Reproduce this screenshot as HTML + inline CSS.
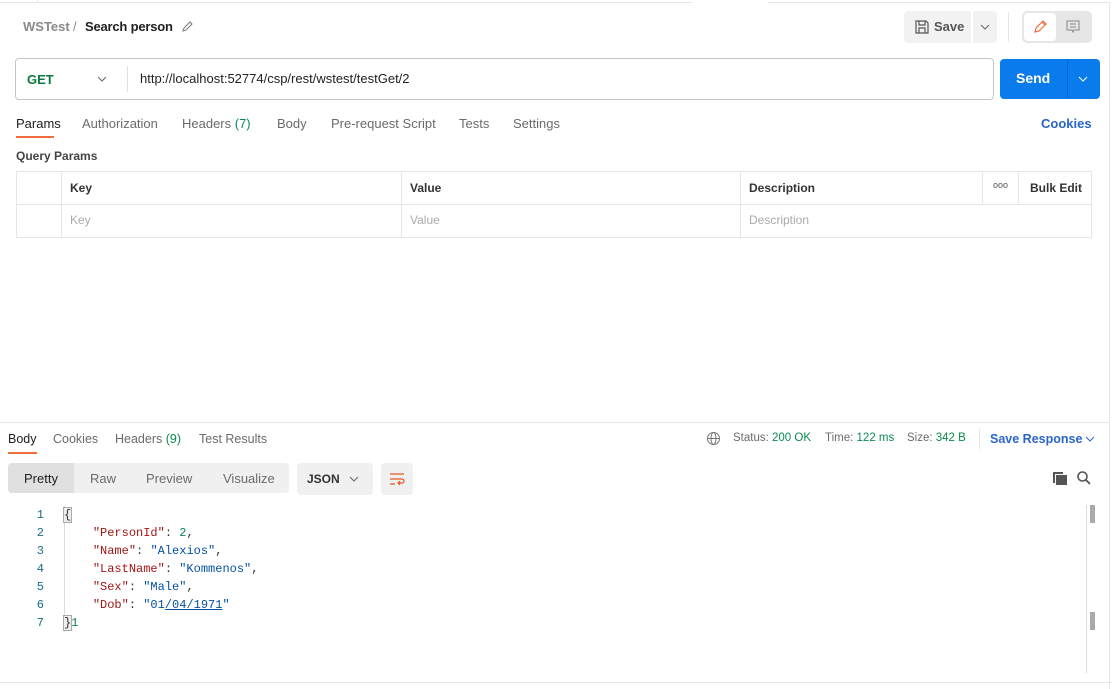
<!DOCTYPE html>
<html><head><style>
*{box-sizing:border-box;margin:0;padding:0}
body{width:1112px;height:689px;background:#fff;font-family:"Liberation Sans",sans-serif;font-size:13px;color:#212121;position:relative;overflow:hidden}
.a{position:absolute}
.t{color:#6b6b6b}
.mono{font-family:"Liberation Mono",monospace;font-size:12px}
</style></head><body>
<div class="a" style="left:0;top:2px;width:692px;height:1px;background:#e6e6e6"></div>
<div class="a" style="left:768px;top:2px;width:342px;height:1px;background:#e6e6e6"></div>
<div class="a" style="left:37px;top:0;width:1px;height:3px;background:#e6e6e6"></div>
<div class="a" style="left:1109px;top:2px;width:1px;height:687px;background:#e6e6e6"></div>
<div class="a" style="left:0;top:682px;width:1112px;height:1px;background:#e6e6e6"></div>

<div class="a" style="left:23px;top:19px;color:#8a8a8a;font-weight:bold">WSTest</div>
<div class="a" style="left:73px;top:19px;color:#8a8a8a">/</div>
<div class="a" style="left:85px;top:19px;font-weight:bold;letter-spacing:-0.2px">Search person</div>
<svg class="a" style="left:181px;top:20px" width="13" height="13" viewBox="0 0 13 13"><path d="M2 11l1-3 6-6 2 2-6 6z" fill="none" stroke="#777" stroke-width="1"/></svg>

<div class="a" style="left:904px;top:11px;width:67px;height:32px;background:#f2f2f2;border-radius:4px 0 0 4px"></div>
<svg class="a" style="left:914px;top:19px" width="16" height="16" viewBox="0 0 16 16"><path d="M2 2h10l2 2v10H2z M5 2v4h6V2 M5 14V9h6v5" fill="none" stroke="#555" stroke-width="1.2"/></svg>
<div class="a" style="left:934px;top:19px;font-weight:bold;color:#555">Save</div>
<div class="a" style="left:973px;top:11px;width:24px;height:32px;background:#f2f2f2;border-radius:0 4px 4px 0"></div>
<svg class="a" style="left:980px;top:23px" width="10" height="8"><path d="M1 2l4 4 4-4" fill="none" stroke="#666"/></svg>
<div class="a" style="left:1008px;top:12px;width:1px;height:30px;background:#e6e6e6"></div>
<div class="a" style="left:1022px;top:11px;width:70px;height:32px;background:#e6e6e6;border-radius:5px"></div>
<div class="a" style="left:1024px;top:13px;width:32px;height:28px;background:#fff;border-radius:4px"></div>
<svg class="a" style="left:1032px;top:19px" width="16" height="16" viewBox="0 0 16 16"><path d="M3 13l1-4 7-7 3 3-7 7z M10 3l3 3" fill="none" stroke="#f26b3a" stroke-width="1.2"/></svg>
<svg class="a" style="left:1065px;top:19px" width="16" height="16" viewBox="0 0 16 16"><path d="M2 2h12v9H9l-1 2-1-2H2z M5 5h6 M5 8h6" fill="none" stroke="#888" stroke-width="1"/></svg>

<div class="a" style="left:15px;top:58px;width:979px;height:42px;border:1px solid #c4c4c4;border-radius:4px"></div>
<div class="a" style="left:27px;top:72px;font-weight:bold;color:#0b7a3e">GET</div>
<svg class="a" style="left:97px;top:75px" width="10" height="8"><path d="M1 2l4 4 4-4" fill="none" stroke="#666"/></svg>
<div class="a" style="left:127px;top:66px;width:1px;height:26px;background:#e0e0e0"></div>
<div class="a" style="left:140px;top:71px">http://localhost:52774/csp/rest/wstest/testGet/2</div>
<div class="a" style="left:1000px;top:59px;width:100px;height:40px;background:#097bed;border-radius:4px"></div>
<div class="a" style="left:1067px;top:59px;width:1px;height:40px;background:#0a66c8"></div>
<div class="a" style="left:1016px;top:70px;color:#fff;font-weight:bold;font-size:14px">Send</div>
<svg class="a" style="left:1078px;top:75px" width="10" height="8"><path d="M1 2l4 4 4-4" fill="none" stroke="#fff"/></svg>

<div class="a" style="left:16px;top:116px">Params</div>
<div class="a" style="left:16px;top:136px;width:38px;height:2px;background:#f26b3a"></div>
<div class="a t" style="left:82px;top:116px">Authorization</div>
<div class="a t" style="left:182px;top:116px">Headers <span style="color:#0b8a4e">(7)</span></div>
<div class="a t" style="left:277px;top:116px">Body</div>
<div class="a t" style="left:331px;top:116px">Pre-request Script</div>
<div class="a t" style="left:459px;top:116px">Tests</div>
<div class="a t" style="left:513px;top:116px">Settings</div>
<div class="a" style="left:1041px;top:116px;color:#2a65c9;font-weight:bold">Cookies</div>

<div class="a" style="left:16px;top:149px;font-size:12px;font-weight:bold;color:#444">Query Params</div>
<div class="a" style="left:16px;top:171px;width:1076px;height:67px;border:1px solid #e6e6e6"></div>
<div class="a" style="left:16px;top:204px;width:1076px;height:1px;background:#e6e6e6"></div>
<div class="a" style="left:61px;top:171px;width:1px;height:67px;background:#e6e6e6"></div>
<div class="a" style="left:401px;top:171px;width:1px;height:67px;background:#e6e6e6"></div>
<div class="a" style="left:740px;top:171px;width:1px;height:67px;background:#e6e6e6"></div>
<div class="a" style="left:982px;top:171px;width:1px;height:33px;background:#e6e6e6"></div>
<div class="a" style="left:1018px;top:171px;width:1px;height:33px;background:#e6e6e6"></div>
<div class="a" style="left:70px;top:181px;font-size:12px;font-weight:bold;color:#333">Key</div>
<div class="a" style="left:410px;top:181px;font-size:12px;font-weight:bold;color:#333">Value</div>
<div class="a" style="left:749px;top:181px;font-size:12px;font-weight:bold;color:#333">Description</div>
<div class="a" style="left:993px;top:180px;font-size:9px;color:#555">ooo</div>
<div class="a" style="left:1030px;top:181px;font-size:12px;font-weight:bold;color:#333">Bulk Edit</div>
<div class="a" style="left:70px;top:213px;font-size:12px;color:#aaa">Key</div>
<div class="a" style="left:410px;top:213px;font-size:12px;color:#aaa">Value</div>
<div class="a" style="left:749px;top:213px;font-size:12px;color:#aaa">Description</div>

<div class="a" style="left:0;top:422px;width:1109px;height:1px;background:#e6e6e6"></div>
<div class="a" style="left:8px;top:432px;font-size:12.5px">Body</div>
<div class="a" style="left:8px;top:452px;width:29px;height:2px;background:#f26b3a"></div>
<div class="a t" style="left:53px;top:432px;font-size:12.5px">Cookies</div>
<div class="a t" style="left:115px;top:432px;font-size:12.5px">Headers <span style="color:#0b8a4e">(9)</span></div>
<div class="a t" style="left:199px;top:432px;font-size:12.5px">Test Results</div>
<svg class="a" style="left:706px;top:431px" width="15" height="15" viewBox="0 0 15 15"><circle cx="7.5" cy="7.5" r="6" fill="none" stroke="#777"/><ellipse cx="7.5" cy="7.5" rx="2.5" ry="6" fill="none" stroke="#777"/><path d="M1.5 7.5h12" stroke="#777"/></svg>
<div class="a t" style="left:733px;top:432px;font-size:11.5px">Status: <span style="color:#0b8a4e">200 OK</span></div>
<div class="a t" style="left:825px;top:432px;font-size:11.5px">Time: <span style="color:#0b8a4e">122 ms</span></div>
<div class="a t" style="left:907px;top:432px;font-size:11.5px">Size: <span style="color:#0b8a4e">342 B</span></div>
<div class="a" style="left:979px;top:429px;width:1px;height:20px;background:#e6e6e6"></div>
<div class="a" style="left:990px;top:432px;font-size:12.5px;font-weight:bold;color:#2a65c9">Save Response</div>
<svg class="a" style="left:1085px;top:435px" width="10" height="8"><path d="M1 2l4 4 4-4" fill="none" stroke="#2a65c9"/></svg>

<div class="a" style="left:8px;top:463px;width:281px;height:30px;background:#f0f0f0;border-radius:4px"></div>
<div class="a" style="left:8px;top:463px;width:66px;height:30px;background:#e0e0e0;border-radius:4px 0 0 4px"></div>
<div class="a" style="left:24px;top:471px">Pretty</div>
<div class="a t" style="left:90px;top:471px">Raw</div>
<div class="a t" style="left:146px;top:471px">Preview</div>
<div class="a t" style="left:223px;top:471px">Visualize</div>
<div class="a" style="left:297px;top:463px;width:76px;height:32px;background:#f0f0f0;border-radius:4px"></div>
<div class="a" style="left:307px;top:472px;font-size:12px;font-weight:bold;color:#333">JSON</div>
<svg class="a" style="left:349px;top:475px" width="10" height="8"><path d="M1 2l4 4 4-4" fill="none" stroke="#666"/></svg>
<div class="a" style="left:381px;top:463px;width:32px;height:32px;background:#f0f0f0;border-radius:4px"></div>
<svg class="a" style="left:389px;top:471px" width="16" height="16" viewBox="0 0 16 16"><path d="M1 3h14 M1 8h12a2 2 0 010 4H9 M11 10l-2 2 2 2 M1 13h5" fill="none" stroke="#e8572a" stroke-width="1.2"/></svg>
<svg class="a" style="left:1052px;top:470px" width="16" height="16" viewBox="0 0 16 16"><path d="M1 2h10v2H3v9H1z" fill="#555"/><rect x="4" y="5" width="11" height="10" fill="#555"/></svg>
<svg class="a" style="left:1076px;top:470px" width="16" height="16" viewBox="0 0 16 16"><circle cx="6.5" cy="6.5" r="4.5" fill="none" stroke="#555" stroke-width="1.6"/><path d="M10 10l4 4" stroke="#555" stroke-width="1.8"/></svg>

<div class="a" style="left:1086px;top:505px;width:1px;height:168px;background:#ddd"></div>
<div class="a" style="left:1090px;top:505px;width:5px;height:18px;background:#aaa"></div>
<div class="a" style="left:1090px;top:612px;width:5px;height:18px;background:#aaa"></div>

<div class="a" style="left:64px;top:506px;width:1px;height:126px;background:#ddd"></div>
<div class="a mono" style="left:30px;top:506px;line-height:18px;color:#1a6e8a;text-align:right;width:14px">1<br>2<br>3<br>4<br>5<br>6<br>7</div>
<div class="a mono" style="left:64px;top:506px;line-height:18px;white-space:pre;color:#333"><span style="background:#eee;outline:1px solid #aaa">{</span>
    <span style="color:#a31515">"PersonId"</span>: <span style="color:#098658">2</span>,
    <span style="color:#a31515">"Name"</span>: <span style="color:#0451a5">"Alexios"</span>,
    <span style="color:#a31515">"LastName"</span>: <span style="color:#0451a5">"Kommenos"</span>,
    <span style="color:#a31515">"Sex"</span>: <span style="color:#0451a5">"Male"</span>,
    <span style="color:#a31515">"Dob"</span>: <span style="color:#0451a5">"01<u>/04/1971</u>"</span>
<span style="background:#eee;outline:1px solid #aaa">}</span><span style="color:#098658">1</span></div>
</body></html>
